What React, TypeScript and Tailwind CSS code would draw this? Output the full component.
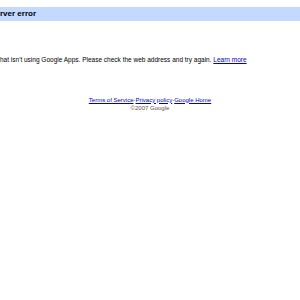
export default function App() {
  return (
    <div className="w-[300px] h-[300px] bg-white overflow-hidden" style={{ fontFamily: '"Liberation Sans", Arial, sans-serif' }}>
      <div className="h-[7px]" />
      <div className="h-[14px] bg-[#c3d9ff] flex items-center">
        <span className="text-[8px] font-bold text-black leading-none">rver error</span>
      </div>
      <div className="h-[36px]" />
      <p className="text-[6.5px] text-black leading-none whitespace-nowrap">
        hat isn't using Google Apps. Please check the web address and try again.{" "}
        <a className="text-[#0000cc] underline">Learn more</a>
      </p>
      <div className="h-[32px]" />
      <div className="flex flex-col items-center text-[6px] leading-[8px]">
        <div className="whitespace-nowrap">
          <a className="text-[#0000cc] underline">Terms of Service</a>·<a className="text-[#0000cc] underline">Privacy policy</a>·<a className="text-[#0000cc] underline">Google Home</a>
        </div>
        <div className="text-[#555]">©2007 Google</div>
      </div>
    </div>
  );
}
